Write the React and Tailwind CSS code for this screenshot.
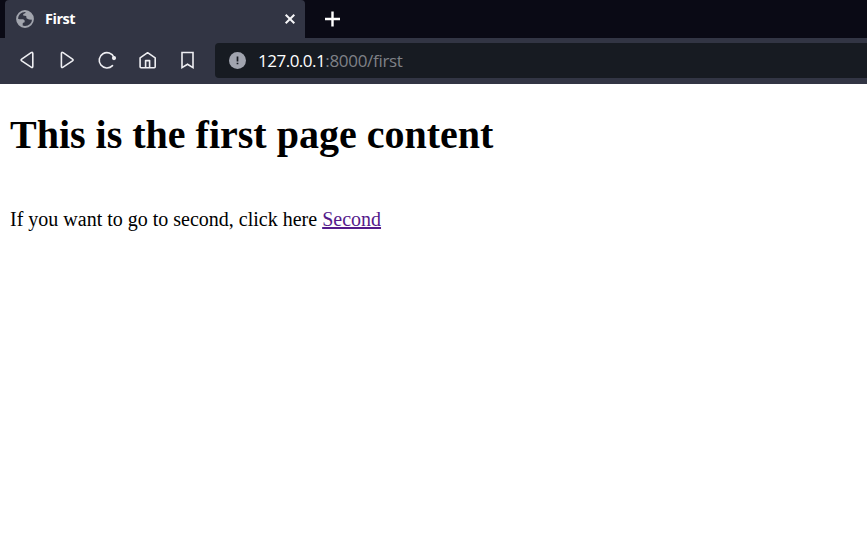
const stroke = {
  fill: 'none',
  stroke: '#eeeef2',
  strokeWidth: 1.6,
  strokeLinejoin: 'round',
  strokeLinecap: 'round',
};

function NavButton({ label, children }) {
  return (
    <button aria-label={label} className="flex size-10 items-center justify-center">
      <svg className="size-5" viewBox="0 0 20 20" {...stroke}>
        {children}
      </svg>
    </button>
  );
}

function TabBar() {
  return (
    <div className="flex h-[38px] bg-[#0a0a15] pl-[5px]">
      <div className="flex w-[300px] items-center rounded-t bg-[#323544] pr-[9px] pl-[11px]">
        <svg className="size-[18px]" viewBox="0 0 18 18">
          <circle cx="9" cy="9" r="8" fill="none" stroke="#a2a5ae" strokeWidth="1.8" />
          <path
            d="M1.2 8.3 3.5 9.2 7.2 9.2 8.7 10.6 8.6 12.2 6.8 13 6.6 16.4 3 14.4 1 11ZM9.7 1.2 9.4 3 7.2 3.9 7.2 5.6 10.2 6 10.5 8.2 13 9.4 15.7 9.8 17 9 16 4.5 12.7 1.9Z"
            fill="#a2a5ae"
          />
        </svg>
        <span className="ml-[11px] font-['Open_Sans',sans-serif] text-[14.5px] leading-5 font-bold tracking-[-0.5px] text-white">
          First
        </span>
        <svg className="ml-auto size-3" viewBox="0 0 12 12">
          <path d="M1.7 1.7 10.3 10.3M10.3 1.7 1.7 10.3" stroke="#f5f5f7" strokeWidth="2" />
        </svg>
      </div>
      <button aria-label="New tab" className="ml-5 flex items-center">
        <svg className="size-4" viewBox="0 0 16 16">
          <path d="M0 8H15M7.5 .5V15.5" stroke="#fff" strokeWidth="2.4" />
        </svg>
      </button>
    </div>
  );
}

function Toolbar() {
  return (
    <div className="flex h-[46px] items-center bg-[#323544] pb-0.5 pl-[7px]">
      <NavButton label="Back">
        <path d="M15.8 3.5V16.3Q15.8 18.2 14.1 17.1L4.7 10.9Q3.5 10 4.7 9.1L14.1 2.7Q15.8 1.6 15.8 3.5Z" />
      </NavButton>
      <NavButton label="Forward">
        <path d="M4.4 3.5V16.3Q4.4 18.2 6.1 17.1L15.5 10.9Q16.7 10 15.5 9.1L6.1 2.7Q4.4 1.6 4.4 3.5Z" />
      </NavButton>
      <NavButton label="Reload">
        <path d="M17 7.3A7.7 7.7 0 1 0 15.5 15.6" />
        <circle cx="17" cy="8.1" r="2.1" fill="#eeeef2" stroke="none" />
      </NavButton>
      <NavButton label="Home">
        <path d="M3.1 7.8 10.6 2.7 18.2 7.8V16.8Q18.2 17.7 17.3 17.7H4Q3.1 17.7 3.1 16.8ZM8.6 17.5V10.6H12.6V17.5" />
      </NavButton>
      <NavButton label="Bookmark">
        <path strokeLinejoin="miter" d="M5 2.5H16V17.6L10.5 14.3 5 17.6Z" />
      </NavButton>
      <div className="ml-2 flex h-[35px] flex-1 items-center rounded-l bg-[#171b22] pl-3.5">
        <svg className="size-[17px]" viewBox="0 0 17 17">
          <circle cx="8.5" cy="8.5" r="8.5" fill="#a1a4af" />
          <path d="M8.5 4.5V9.4M8.5 10.8V12.3" stroke="#171b22" strokeWidth="1.7" />
        </svg>
        <span className="ml-3 pt-0.5 font-['Open_Sans',sans-serif] text-[17px] leading-6 tracking-[-0.3px] text-[#7f8187]">
          <span className="tracking-[-0.5px] text-white">127.0.0.1</span>:8000/first
        </span>
      </div>
    </div>
  );
}

export default function App() {
  return (
    <div className="flex h-screen flex-col overflow-hidden bg-white">
      <TabBar />
      <Toolbar />
      <main className="px-2.5 pt-7 font-['Liberation_Serif',serif] text-[20px] text-black">
        <h1 className="text-[40px] leading-[46px] font-bold">This is the first page content</h1>
        <p className="mt-[50px] leading-[23px]">
          If you want to go to second, click here{' '}
          <a href="#second" className="text-[#551a8b] underline">
            Second
          </a>
        </p>
      </main>
    </div>
  );
}
